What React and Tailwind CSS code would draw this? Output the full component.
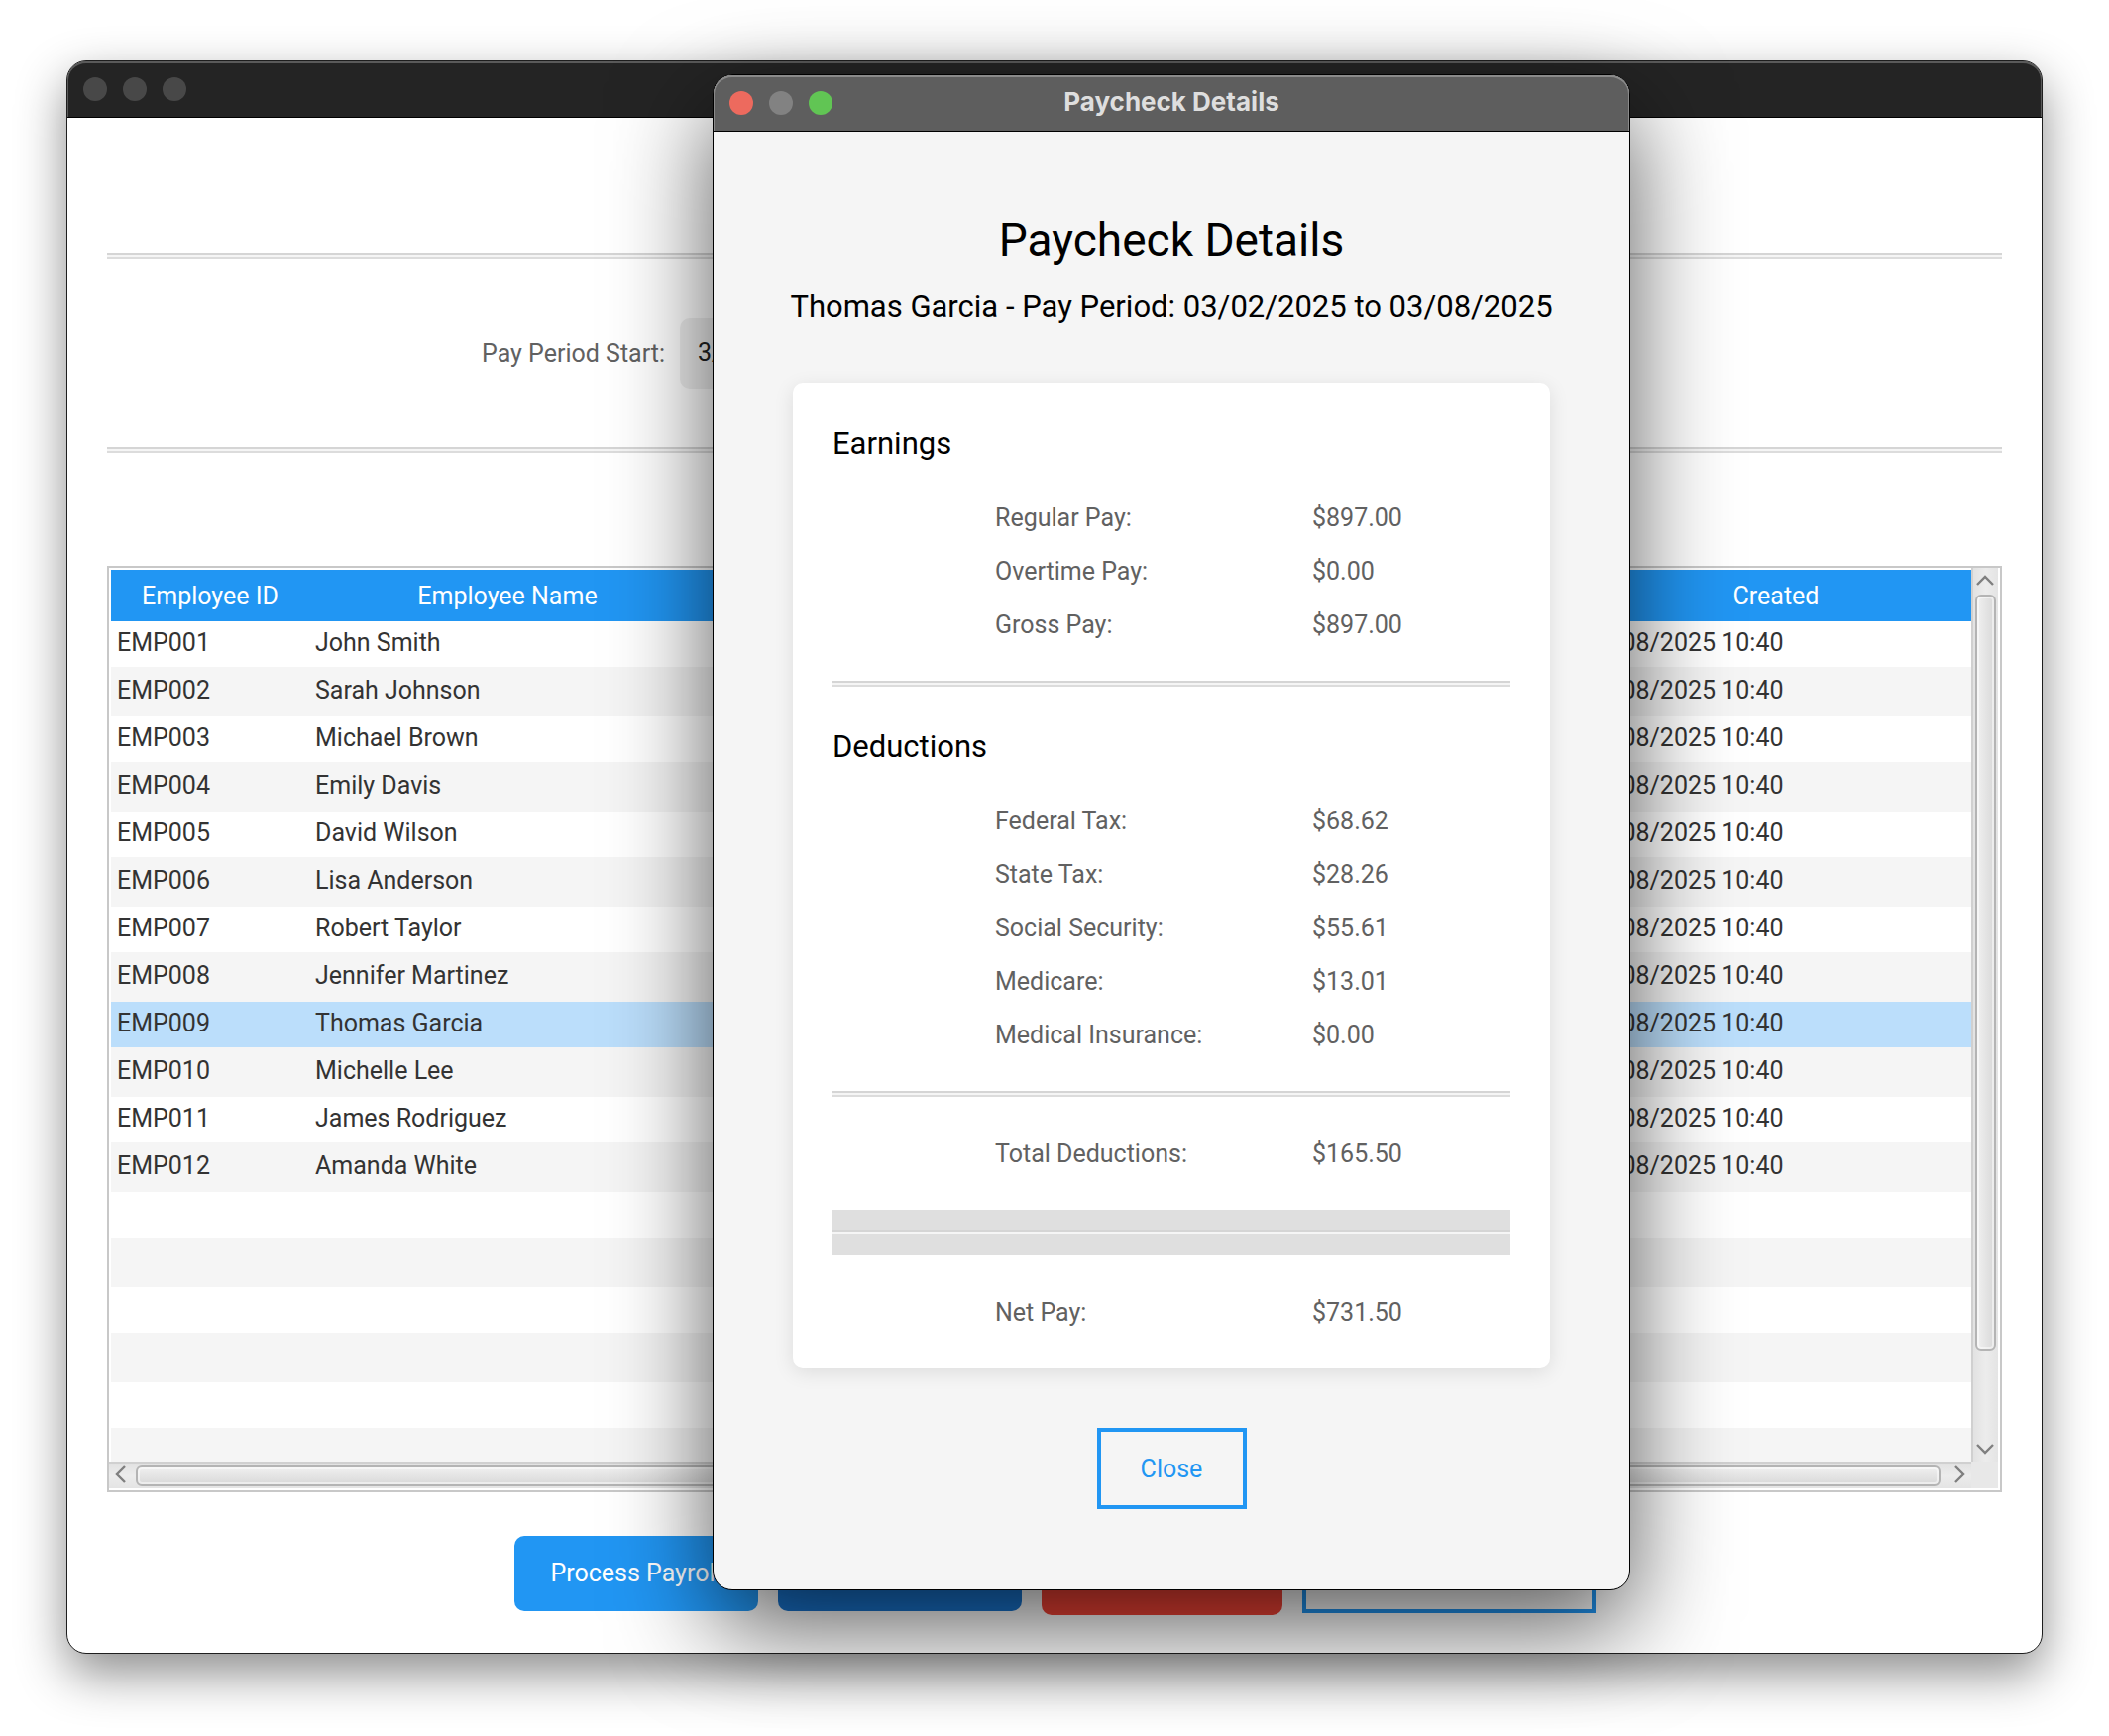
const employees = [
  ["EMP001", "John Smith"],
  ["EMP002", "Sarah Johnson"],
  ["EMP003", "Michael Brown"],
  ["EMP004", "Emily Davis"],
  ["EMP005", "David Wilson"],
  ["EMP006", "Lisa Anderson"],
  ["EMP007", "Robert Taylor"],
  ["EMP008", "Jennifer Martinez"],
  ["EMP009", "Thomas Garcia"],
  ["EMP010", "Michelle Lee"],
  ["EMP011", "James Rodriguez"],
  ["EMP012", "Amanda White"],
];
const created = "03/08/2025 10:40";
const selectedId = "EMP009";

const earnings = [
  ["Regular Pay:", "$897.00"],
  ["Overtime Pay:", "$0.00"],
  ["Gross Pay:", "$897.00"],
];
const deductions = [
  ["Federal Tax:", "$68.62"],
  ["State Tax:", "$28.26"],
  ["Social Security:", "$55.61"],
  ["Medicare:", "$13.01"],
  ["Medical Insurance:", "$0.00"],
];

function TitleBar({ title, active }) {
  return (
    <header
      className={
        active
          ? "flex h-[57px] items-center rounded-t-[19px] border-b border-black bg-[#5e5e5e] px-4 shadow-[inset_0_2px_0_#8a8a8a,inset_1px_0_0_#8a8a8a,inset_-1px_0_0_#8a8a8a]"
          : "flex h-[57px] items-center rounded-t-[19px] border-b border-black bg-[#242424] px-4 shadow-[inset_0_2px_0_#5a5a5a,inset_1px_0_0_#5a5a5a,inset_-1px_0_0_#5a5a5a]"
      }
    >
      <div className="flex flex-1 gap-4">
        <button aria-label="Close window" className={active ? "size-6 rounded-full bg-[#ed6a5e]" : "size-6 rounded-full bg-[#484848]"} />
        <button aria-label="Minimize window" className={active ? "size-6 rounded-full bg-[#828282]" : "size-6 rounded-full bg-[#484848]"} />
        <button aria-label="Zoom window" className={active ? "size-6 rounded-full bg-[#61c554]" : "size-6 rounded-full bg-[#484848]"} />
      </div>
      <h1 className="pb-[2px] font-['Inter',sans-serif] text-[26px] leading-8 font-bold text-[#dedede]">{title}</h1>
      <div className="flex-1" />
    </header>
  );
}

function Separator() {
  return (
    <div role="separator" className="h-[6px] border-y-2 border-t-[#d5d5d5] border-b-[#dcdcdc] bg-[#f5f5f5]" />
  );
}

function Arrow({ d, label, className }) {
  return (
    <button aria-label={label} className={className}>
      <svg viewBox="0 0 18 18" className="size-[18px]" fill="none" stroke="#7f7f7f" strokeWidth="2.4">
        <path d={d} />
      </svg>
    </button>
  );
}

function Lines({ items }) {
  return (
    <dl className="pl-[164px]">
      {items.map(([label, value]) => (
        <div key={label} className="grid h-[54px] grid-cols-[320px_1fr] pt-px leading-[54px]">
          <dt>{label}</dt>
          <dd>{value}</dd>
        </div>
      ))}
    </dl>
  );
}

function EmployeeTable() {
  return (
    <table className="w-full min-w-[1880px] table-fixed border-collapse text-left text-[#333333]">
      <colgroup>
        <col className="w-[200px]" />
        <col className="w-[400px]" />
        <col />
        <col className="w-[400px]" />
      </colgroup>
      <thead>
        <tr className="h-[52px] bg-[#2196f3] text-center text-white">
          <th className="px-0 pt-[2px] pb-0 text-center font-normal">Employee ID</th>
          <th className="px-0 pt-[2px] pb-0 text-center font-normal">Employee Name</th>
          <td />
          <th className="px-0 pt-[2px] pb-0 text-center font-normal">Created</th>
        </tr>
      </thead>
      <tbody>
        {employees.map(([id, name], i) => (
          <tr
            key={id}
            className={id === selectedId ? "h-[46px] bg-[#bbdefb]" : i % 2 ? "h-[50px] bg-[#f5f5f5]" : "h-[46px] bg-white"}
          >
            <td className="px-[6px] pt-0 pb-[2px]">{id}</td>
            <td className="px-[6px] pt-0 pb-[2px]">{name}</td>
            <td />
            <td className="px-[6px] pt-0 pb-[2px]">{created}</td>
          </tr>
        ))}
        <tr className="h-[46px]"><td colSpan={4} /></tr>
        <tr className="h-[50px] bg-[#f5f5f5]"><td colSpan={4} /></tr>
        <tr className="h-[46px]"><td colSpan={4} /></tr>
        <tr className="h-[50px] bg-[#f5f5f5]"><td colSpan={4} /></tr>
        <tr className="h-[46px]"><td colSpan={4} /></tr>
        <tr className="h-[34px] bg-[#f5f5f5]"><td colSpan={4} /></tr>
      </tbody>
    </table>
  );
}

function TableFrame() {
  return (
    <div className="grid flex-1 grid-cols-[minmax(0,1fr)_27px] grid-rows-[1fr_27px] border-2 border-[#c8c8c8] bg-white pr-[2px] pb-[2px]">
      <div className="overflow-hidden pt-[2px] pl-[2px]">
        <EmployeeTable />
      </div>
      <div className="flex flex-col border-l-2 border-[#d0d0d0] bg-linear-to-r from-[#e2e2e2] via-[#ececec] to-[#e4e4e4] px-[2px]">
        <Arrow label="Scroll up" d="M1 14 9 6l8 8" className="flex h-[27px] items-center justify-center pr-[2px] pb-1" />
        <div className="flex-1">
          <div className="h-9/10 rounded-[6px] border-2 border-[#b4b4b4] bg-linear-to-r from-[#f0f0f0] to-[#d9d9d9] shadow-[inset_0_0_0_2px_rgba(255,255,255,0.5)]" />
        </div>
        <Arrow label="Scroll down" d="M1 5l8 8 8-8" className="flex h-[27px] items-center justify-center pt-px pr-[2px]" />
      </div>
      <div className="flex border-t-2 border-[#d0d0d0] bg-linear-to-b from-[#e2e2e2] via-[#ececec] to-[#e4e4e4] py-[2px]">
        <Arrow label="Scroll left" d="M13 1 5 9l8 8" className="flex w-[27px] items-center justify-center pr-[4px] pb-[4px]" />
        <div className="mr-1 flex-1 rounded-[6px] border-2 border-[#b4b4b4] bg-linear-to-b from-[#f0f0f0] to-[#d9d9d9] shadow-[inset_0_0_0_2px_rgba(255,255,255,0.5)]" />
        <Arrow label="Scroll right" d="M5 1l8 8-8 8" className="flex w-[27px] items-center justify-center pb-[4px] pl-[2px]" />
      </div>
      <div className="bg-[#e8e8e8]" />
    </div>
  );
}

function PayrollWindow() {
  return (
    <main className="flex flex-1 flex-col rounded-[20px] border border-[#1e1e1e] bg-white shadow-[0_20px_50px_rgba(0,0,0,0.45)]">
      <TitleBar />
      <div className="flex flex-1 flex-col px-10 pt-[136px] pb-[38px]">
        <Separator />
        <form className="mx-auto mt-[60px] mb-[58px] flex w-[1156px] items-center gap-[15px]">
          <label htmlFor="period-start" className="whitespace-nowrap text-[#616161]">
            Pay Period Start:
          </label>
          <input
            id="period-start"
            defaultValue="3/2/2025"
            className="h-[72px] min-w-0 flex-1 rounded-[10px] bg-[#f0f0f0] px-[18px] pb-1 text-[#212121]"
          />
        </form>
        <Separator />
        <div className="mt-[114px] flex flex-1 flex-col">
          <TableFrame />
        </div>
        <div className="mt-10 flex items-center justify-center gap-5">
          <button className="h-[76px] w-[246px] rounded-[10px] bg-[#2196f3] text-white">Process Payroll</button>
          <button aria-label="View Details" className="h-[76px] w-[246px] rounded-[10px] bg-[#1976d2]" />
          <button aria-label="Delete" className="h-[84px] w-[243px] rounded-[10px] bg-[#f44336]" />
          <button aria-label="Back" className="h-[80px] w-[296px] border-4 border-[#2196f3]" />
        </div>
      </div>
    </main>
  );
}

function PaycheckDialog() {
  return (
    <section
      role="dialog"
      aria-label="Paycheck Details"
      className="absolute top-[75px] left-[719px] w-[926px] rounded-[20px] border border-black bg-[#f5f5f5] shadow-[0_36px_100px_rgba(0,0,0,0.65)]"
    >
      <TitleBar title="Paycheck Details" active />
      <div className="px-20 pt-[79px] pb-[81px]">
        <h2 className="text-center text-[46px] leading-[60px] text-black">Paycheck Details</h2>
        <p className="-mx-5 mt-[18px] text-center text-[31px] leading-10 whitespace-nowrap text-black">
          Thomas Garcia - Pay Period: 03/02/2025 to 03/08/2025
        </p>
        <div className="mt-[57px] rounded-[10px] bg-white px-10 pt-[41px] pb-[30px] text-[#616161] shadow-[0_4px_20px_rgba(0,0,0,0.1)]">
          <h3 className="mb-[27px] text-[31px] leading-10 text-black">Earnings</h3>
          <Lines items={earnings} />
          <div className="mt-[30px] mb-[41px]">
            <Separator />
          </div>
          <h3 className="mb-[27px] text-[31px] leading-10 text-black">Deductions</h3>
          <Lines items={deductions} />
          <div className="my-[30px]">
            <Separator />
          </div>
          <Lines items={[["Total Deductions:", "$165.50"]]} />
          <div className="my-[30px] border-t-20 border-b-22 border-[#dfdfdf]">
            <div className="h-1 border-t-2 border-[#d5d5d5] bg-[#f5f5f5]" />
          </div>
          <Lines items={[["Net Pay:", "$731.50"]]} />
        </div>
        <button className="mx-auto mt-[60px] block h-[82px] w-[151px] border-4 border-[#2196f3] pt-[2px] text-[#2196f3]">
          Close
        </button>
      </div>
    </section>
  );
}

export default function App() {
  return (
    <div className="relative flex min-h-screen flex-col overflow-hidden bg-white px-[67px] pt-[61px] pb-[83px] font-['Roboto',sans-serif] text-[25px] leading-8">
      <PayrollWindow />
      <PaycheckDialog />
    </div>
  );
}
